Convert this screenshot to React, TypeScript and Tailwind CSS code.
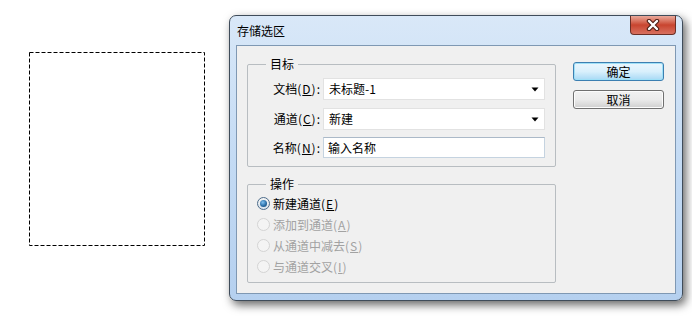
import React from "react";

function Arrow() {
  return (
    <svg width="8" height="5" viewBox="0 0 8 5" className="shrink-0">
      <path d="M0.5 0.5 L7.5 0.5 L4 4.5 Z" fill="#000" />
    </svg>
  );
}

function Select({ value }: { value: string }) {
  return (
    <div className="w-[222px] h-[22px] bg-white border border-[#e2e2e2] flex items-center justify-between pl-[5px] pr-[5px]">
      <span className="leading-none">{value}</span>
      <Arrow />
    </div>
  );
}

function Key({ k }: { k: string }) {
  return (
    <span className="tracking-[1px]">
      (<u>{k}</u>)
    </span>
  );
}

function Radio({ checked, disabled }: { checked?: boolean; disabled?: boolean }) {
  if (checked) {
    return (
      <div className="w-[13px] h-[13px] rounded-full border border-[#4d6c8a] bg-gradient-to-b from-[#f4f4f4] to-[#d8e4ee] flex items-center justify-center">
        <div className="w-[7px] h-[7px] rounded-full bg-[radial-gradient(circle_at_40%_35%,#7fc0f0,#2a6fa8_55%,#153e66)]" />
      </div>
    );
  }
  return (
    <div
      className={
        "w-[13px] h-[13px] rounded-full border " +
        (disabled ? "border-[#d4d4d4] bg-[#f4f4f4]" : "border-[#8e8f8f] bg-white")
      }
    />
  );
}

function RadioRow({
  checked,
  disabled,
  children,
}: {
  checked?: boolean;
  disabled?: boolean;
  children: React.ReactNode;
}) {
  return (
    <div className="h-[21px] flex items-center gap-[3px]">
      <Radio checked={checked} disabled={disabled} />
      <span className={disabled ? "text-[#a2a2a2]" : "text-black"}>{children}</span>
    </div>
  );
}

export default function App() {
  return (
    <div className="relative w-[692px] h-[326px] bg-white overflow-hidden text-[12px] text-black font-['Noto_Sans_CJK_SC','Noto_Sans',sans-serif]">
      {/* selection marquee */}
      <svg className="absolute left-[28px] top-[51px]" width="178" height="196">
        <rect
          x="1.5"
          y="1.5"
          width="175"
          height="193"
          fill="none"
          stroke="#000"
          strokeWidth="1"
          strokeDasharray="4 2"
        />
      </svg>

      {/* dialog window */}
      <div className="absolute left-[229px] top-[15px] w-[454px] h-[286px] rounded-[7px] border border-[#3f4c5a] bg-gradient-to-b from-[#d9e8f8] via-[#c4dbf4] to-[#b5d0ef] shadow-[3px_4px_10px_rgba(0,0,0,0.6)] flex flex-col">
        {/* title bar */}
        <div className="relative h-[29px] flex items-center pl-[7px] shrink-0">
          <span className="leading-none">存储选区</span>
          <div className="absolute right-[6px] top-0 w-[46px] h-[19px] rounded-b-[4px] border border-t-0 border-[#6b2f26] bg-gradient-to-b from-[#e9a99b] via-[#c8442f] to-[#d8705f] flex items-center justify-center">
            <svg width="16" height="12" viewBox="0 0 16 12">
              <path d="M4 2 L12 10 M12 2 L4 10" stroke="#4b1c14" strokeWidth="4.5" strokeLinecap="round" />
              <path d="M4 2 L12 10 M12 2 L4 10" stroke="#ffffff" strokeWidth="2.4" strokeLinecap="round" />
            </svg>
          </div>
        </div>

        {/* client area */}
        <div className="flex-1 mx-[6px] mb-[6px] border border-[#7f98b3] bg-[#f0f0f0] flex">
          <div className="pl-[10px] pt-[11px] flex flex-col">
            <fieldset className="w-[309px] h-[110px] border border-[#b8bdc1] rounded-[2px] px-0">
              <legend className="ml-[18px] px-[4px] leading-[14px]">目标</legend>
              <div className="mt-[7px] flex flex-col">
                <div className="flex items-center gap-[3px] h-[22px]">
                  <span className="w-[72px] text-right leading-none">
                    文档<Key k="D" />:
                  </span>
                  <Select value="未标题-1" />
                </div>
                <div className="flex items-center gap-[3px] h-[22px] mt-[8px]">
                  <span className="w-[72px] text-right leading-none">
                    通道<Key k="C" />:
                  </span>
                  <Select value="新建" />
                </div>
                <div className="flex items-center gap-[3px] h-[21px] mt-[7px]">
                  <span className="w-[72px] text-right leading-none">
                    名称<Key k="N" />:
                  </span>
                  <div className="w-[222px] h-[21px] bg-white border border-[#c5d3e0] border-t-[#abb9c8] flex items-center pl-[4px]">
                    <span className="leading-none">输入名称</span>
                  </div>
                </div>
              </div>
            </fieldset>

            <fieldset className="mt-[10px] w-[309px] h-[106px] border border-[#b8bdc1] rounded-[2px] px-0">
              <legend className="ml-[18px] px-[4px] leading-[14px]">操作</legend>
              <div className="mt-[2px] pl-[9px] flex flex-col">
                <RadioRow checked>
                  新建通道<Key k="E" />
                </RadioRow>
                <RadioRow disabled>
                  添加到通道<Key k="A" />
                </RadioRow>
                <RadioRow disabled>
                  从通道中减去<Key k="S" />
                </RadioRow>
                <RadioRow disabled>
                  与通道交叉<Key k="I" />
                </RadioRow>
              </div>
            </fieldset>
          </div>

          <div className="ml-[17px] pt-[16px] flex flex-col gap-[9px]">
            <button className="w-[91px] h-[19px] rounded-[3px] border border-[#3c7fb1] bg-gradient-to-b from-[#eaf6fd] via-[#d9f0fc] to-[#a7d9f5] shadow-[inset_0_0_0_1px_#9fe0f7] flex items-center justify-center leading-none text-black">
              确定
            </button>
            <button className="w-[91px] h-[19px] rounded-[3px] border border-[#707070] bg-gradient-to-b from-[#f2f2f2] via-[#ebebeb] to-[#cfcfcf] shadow-[inset_0_0_0_1px_#fcfcfc] flex items-center justify-center leading-none text-black">
              取消
            </button>
          </div>
        </div>
      </div>
    </div>
  );
}
